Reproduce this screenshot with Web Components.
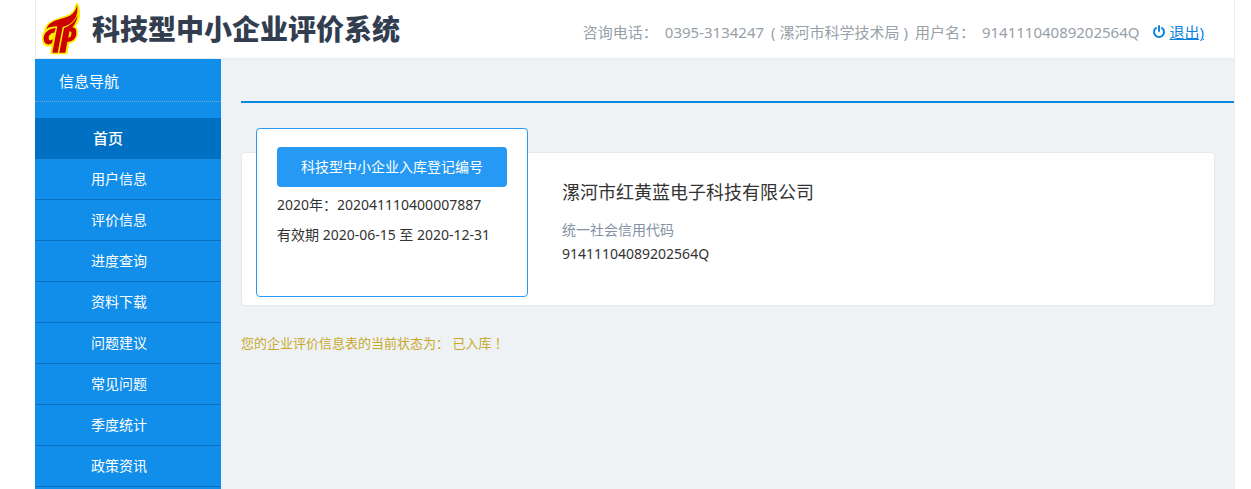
<!DOCTYPE html>
<html lang="zh-CN">
<head>
<meta charset="utf-8">
<title>科技型中小企业评价系统</title>
<style>
  body {
    margin: 0;
    background: #fff;
    color: #333;
    font: 14px/24px "Noto Sans", "Noto Sans CJK SC", sans-serif;
  }
</style>
</head>
<body>
<app-shell>
  <app-header slot="header" phone="0395-3134247" office="漯河市科学技术局" user="91411104089202564Q">科技型中小企业评价系统</app-header>
  <side-nav slot="nav" heading="信息导航">
    <nav-item href="#home" active>首页</nav-item>
    <nav-item href="#user">用户信息</nav-item>
    <nav-item href="#review">评价信息</nav-item>
    <nav-item href="#progress">进度查询</nav-item>
    <nav-item href="#download">资料下载</nav-item>
    <nav-item href="#advice">问题建议</nav-item>
    <nav-item href="#faq">常见问题</nav-item>
    <nav-item href="#stats">季度统计</nav-item>
    <nav-item href="#policy">政策资讯</nav-item>
  </side-nav>
  <company-card name="漯河市红黄蓝电子科技有限公司" code="91411104089202564Q">
    <register-box slot="register" label="科技型中小企业入库登记编号">
      <p>2020年：202041110400007887</p>
      <p>有效期 2020-06-15 至 2020-12-31</p>
    </register-box>
  </company-card>
  <status-line>您的企业评价信息表的当前状态为： 已入库 ！</status-line>
</app-shell>

<script>
// Crea un template a partir de HTML
function crearTemplate(html) {
  const t = document.createElement('template');
  t.innerHTML = html;
  return t;
}

const templateShell = crearTemplate(`
  <style>
    :host {
      display: flex;
      flex-direction: column;
      min-height: 100vh;
      box-sizing: border-box;
      padding: 0 16px 0 35px;
    }
    .body {
      flex: 1;
      display: grid;
      grid-template-columns: 186px 1fr;
      background: #eef2f5;
    }
    main {
      padding: 42px 0 0 20px;
    }
    .rule {
      height: 2px;
      margin: 0 1px 49px 0;
      border: 0;
      background: #0a8ade;
    }
  </style>
  <slot name="header"></slot>
  <div class="body">
    <slot name="nav"></slot>
    <main>
      <hr class="rule">
      <slot></slot>
    </main>
  </div>
`);

class AppShell extends HTMLElement {
  constructor() {
    super();
    this.attachShadow({ mode: 'open' });
    this.shadowRoot.appendChild(templateShell.content.cloneNode(true));
  }
}
customElements.define('app-shell', AppShell);


const templateHeader = crearTemplate(`
  <style>
    :host {
      display: block;
    }
    header {
      display: flex;
      align-items: center;
      height: 58px;
      padding: 0 30px 0 6px;
      border: 1px solid #e8edf0;
      border-top: 0;
      color: #98a0a8;
      font-size: 15px;
    }
    .logo {
      flex: none;
      width: 40px;
      height: 56px;
      margin-right: 10px;
    }
    h1 {
      margin: 0;
      color: #323e50;
      font-size: 28px;
      line-height: 56px;
      font-weight: 900;
      white-space: nowrap;
    }
    .info {
      display: flex;
      gap: 7px;
      margin-left: auto;
      padding-top: 6px;
      white-space: nowrap;
    }
    .logout {
      display: flex;
      align-items: center;
      gap: 3px;
      margin-left: 13px;
      padding-top: 6px;
      color: #0a84e0;
    }
    .logout svg {
      width: 14px;
      height: 14px;
    }
  </style>
  <header>
    <svg class="logo" viewBox="12 3 120 168" aria-hidden="true">
      <!-- Halo amarillo -->
      <path fill="#ffee00" stroke="#ffee00" stroke-width="9" stroke-linejoin="round"
        d="M117 14C114 32 104 44 88 50C66 58 46 60 32 74C24 82 22 91 24 94C15 104 13 124 22 132C27 136 36 136 46 130L42 158H84L90 126C104 126 115 116 115 99C115 88 112 83 106 80C121 66 127 40 117 14Z"/>
      <!-- Llama y letras rojas -->
      <g fill="#cc0000">
        <path d="M117 14C114 32 104 44 88 50C66 58 46 60 32 74C28 79 26 84 26 88C32 81 42 79 58 79L43 158H59L74 81C104 73 124 50 117 14Z"/>
        <path d="M53 84C30 86 16 100 17 118C18 132 30 137 42 130L45 117C38 123 32 122 32 114C32 104 40 98 49 98Z"/>
        <path d="M119 44C113 62 98 76 78 84L64 158H82L88 125C104 126 115 116 115 99C115 88 112 83 103 82C112 72 118 58 119 44ZM94 94C100 94 101 98 100 103C99 110 96 113 91 113Z"/>
      </g>
    </svg>
    <h1><slot></slot></h1>
    <div class="info">
      <span>咨询电话：</span>
      <span class="phone"></span>
      <span class="office"></span>
      <span>用户名：</span>
      <span class="user"></span>
    </div>
    <a class="logout" href="#logout">
      <svg viewBox="0 0 14 14" fill="none" stroke="#0a84e0" stroke-width="2" stroke-linecap="round" aria-hidden="true">
        <path d="M4 3A5 5 0 1 0 10 3M7 1V6"/>
      </svg>
      <span>退出)</span>
    </a>
  </header>
`);

class AppHeader extends HTMLElement {
  constructor() {
    super();
    this.attachShadow({ mode: 'open' });
    this.shadowRoot.appendChild(templateHeader.content.cloneNode(true));
  }

  connectedCallback() {
    this.shadowRoot.querySelector('.phone').textContent = this.getAttribute('phone');
    this.shadowRoot.querySelector('.office').textContent = `( ${this.getAttribute('office')} )`;
    this.shadowRoot.querySelector('.user').textContent = this.getAttribute('user');
  }
}
customElements.define('app-header', AppHeader);


const templateNav = crearTemplate(`
  <style>
    :host {
      display: block;
      background: #118eea;
      color: #fff;
    }
    h2 {
      margin: 0 0 16px;
      padding: 10px 24px 8px;
      border-bottom: 1px dotted #6fa9d3;
      font-size: 15px;
      line-height: 24px;
      font-weight: 400;
    }
  </style>
  <nav>
    <h2></h2>
    <slot></slot>
  </nav>
`);

class SideNav extends HTMLElement {
  constructor() {
    super();
    this.attachShadow({ mode: 'open' });
    this.shadowRoot.appendChild(templateNav.content.cloneNode(true));
  }

  connectedCallback() {
    this.shadowRoot.querySelector('h2').textContent = this.getAttribute('heading');
  }
}
customElements.define('side-nav', SideNav);


const templateNavItem = crearTemplate(`
  <style>
    :host {
      display: block;
    }
    a {
      display: block;
      padding-left: 56px;
      border-bottom: 1px solid #0a70bd;
      color: #fff;
      line-height: 40px;
      text-decoration: none;
    }
    a:hover {
      background: #0a7fd6;
    }
    :host([active]) a {
      padding-left: 58px;
      background: #0070c2;
      font-size: 15px;
      font-weight: 500;
    }
  </style>
  <a><slot></slot></a>
`);

class NavItem extends HTMLElement {
  constructor() {
    super();
    this.attachShadow({ mode: 'open' });
    this.shadowRoot.appendChild(templateNavItem.content.cloneNode(true));
  }

  connectedCallback() {
    this.shadowRoot.querySelector('a').setAttribute('href', this.getAttribute('href'));
  }
}
customElements.define('nav-item', NavItem);


const templateCard = crearTemplate(`
  <style>
    :host {
      display: flex;
      gap: 34px;
      margin-right: 20px;
      padding: 0 14px 8px;
      border: 1px solid #e4e9ec;
      border-radius: 4px;
      background: #fff;
    }
    .company {
      padding-top: 27px;
    }
    h3 {
      margin: 0 0 14px;
      font-size: 18px;
      line-height: 24px;
      font-weight: 400;
    }
    dl, dd {
      margin: 0;
    }
    dt {
      color: #8492a6;
    }
  </style>
  <slot name="register"></slot>
  <div class="company">
    <h3></h3>
    <dl>
      <dt>统一社会信用代码</dt>
      <dd></dd>
    </dl>
  </div>
`);

class CompanyCard extends HTMLElement {
  constructor() {
    super();
    this.attachShadow({ mode: 'open' });
    this.shadowRoot.appendChild(templateCard.content.cloneNode(true));
  }

  connectedCallback() {
    this.shadowRoot.querySelector('h3').textContent = this.getAttribute('name');
    this.shadowRoot.querySelector('dd').textContent = this.getAttribute('code');
  }
}
customElements.define('company-card', CompanyCard);


const templateRegister = crearTemplate(`
  <style>
    :host {
      display: block;
      box-sizing: border-box;
      width: 272px;
      /* La caja sobresale por encima de la tarjeta */
      margin-top: -25px;
      padding: 18px 20px 46px;
      border: 1px solid #2599f3;
      border-radius: 4px;
      background: #fff;
    }
    button {
      display: block;
      width: 100%;
      margin-bottom: 3px;
      padding: 0;
      border: 0;
      border-radius: 4px;
      background: #2599f3;
      color: #fff;
      font: inherit;
      line-height: 40px;
      cursor: pointer;
    }
    ::slotted(p) {
      margin: 0;
      line-height: 30px;
      white-space: nowrap;
    }
  </style>
  <button type="button"></button>
  <slot></slot>
`);

class RegisterBox extends HTMLElement {
  constructor() {
    super();
    this.attachShadow({ mode: 'open' });
    this.shadowRoot.appendChild(templateRegister.content.cloneNode(true));
  }

  connectedCallback() {
    this.shadowRoot.querySelector('button').textContent = this.getAttribute('label');
  }
}
customElements.define('register-box', RegisterBox);


const templateStatus = crearTemplate(`
  <style>
    :host {
      display: block;
      margin-top: 25px;
      color: #c9a92c;
      font-size: 13px;
    }
  </style>
  <slot></slot>
`);

class StatusLine extends HTMLElement {
  constructor() {
    super();
    this.attachShadow({ mode: 'open' });
    this.shadowRoot.appendChild(templateStatus.content.cloneNode(true));
  }
}
customElements.define('status-line', StatusLine);
</script>
</body>
</html>
